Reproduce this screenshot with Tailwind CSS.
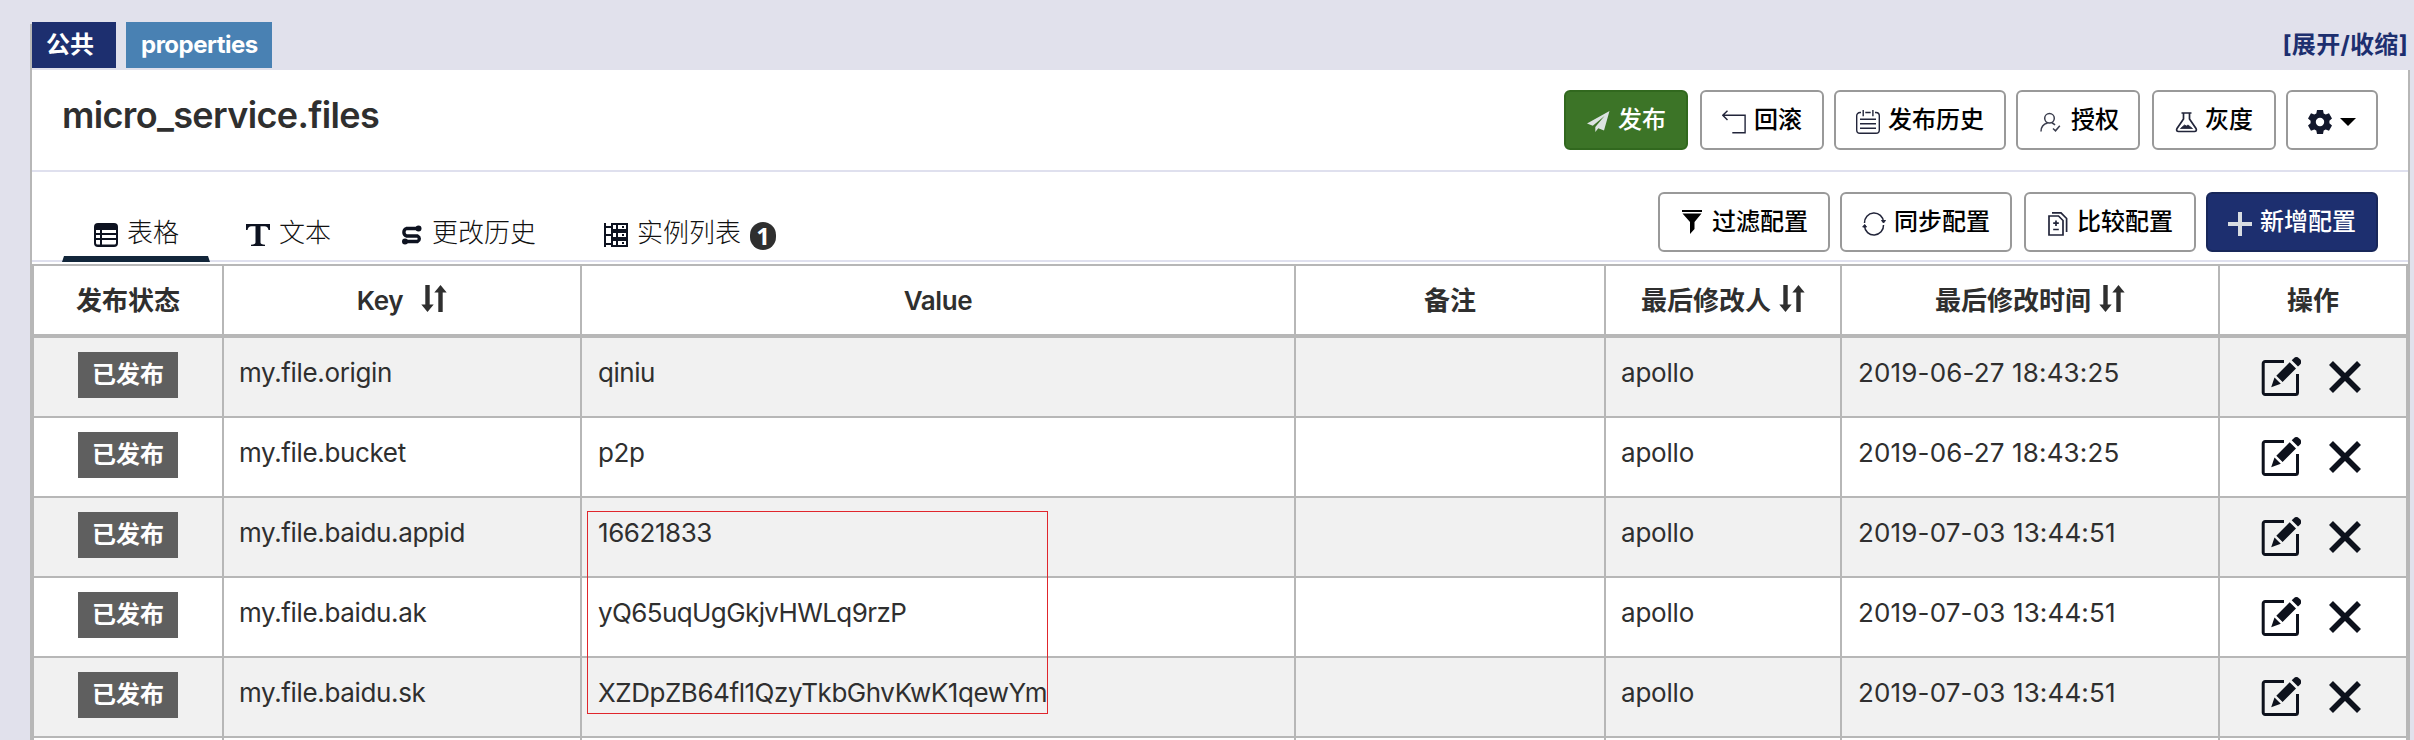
<!DOCTYPE html>
<html lang="zh-CN">
<head>
<meta charset="utf-8">
<title>micro_service.files</title>
<script src="https://cdn.jsdelivr.net/npm/@tailwindcss/browser@4"></script>
</head>
<body class="h-[740px] overflow-hidden bg-[#e1e1ec] pl-[30px] pt-6 font-[Inter,'Noto_Sans_CJK_SC',sans-serif] text-[26px] leading-9 text-[#2f2f2f]">
<svg class="hidden">
  <symbol id="sort" viewBox="0 0 26 28">
    <path d="M4.300 0h4.400v19.500h4L6.500 27 .3 19.500h4zM17.300 27h4.400V7.500h4L19.500 0l-6.200 7.500h4z" fill="#2f2f2f"/>
  </symbol>
  <symbol id="edit" viewBox="0 0 40 40">
    <path d="M23 4.500H4.200A2 2 0 0 0 2.200 6.500v29a2 2 0 0 0 2 2h30.300a2 2 0 0 0 2-2V17" fill="none" stroke="#0d111c" stroke-width="3"/>
    <path d="M28.700 5.300 35 11.600 21.600 25 15.300 18.700zM13.500 20.500l6.300 6.300L10.200 30.200zM30.700 3.300 32.600 1.400a4 4 0 0 1 5.600 0l.7.7a4 4 0 0 1 0 5.600L37 9.600z" fill="#0d111c"/>
  </symbol>
  <symbol id="cross" viewBox="0 0 32 32">
    <path d="M2 2 30 30M30 2 2 30" stroke="#0d111c" stroke-width="5.600"/>
  </symbol>
</svg>
<section class="relative h-[716px] w-[2380px] border-l-2 border-[#b7b7b7]">
  <header class="flex h-[46px] items-start justify-between text-2xl font-semibold">
    <div class="-mt-0.5 flex gap-[10px] text-white">
      <span class="flex h-[46px] w-[84px] items-center bg-[#1d2f6f] pl-[14px] font-bold">公共</span>
      <span class="flex h-[46px] w-[146px] items-center bg-[#4981b3] pl-[15px] font-bold tracking-[-0.5px]">properties</span>
    </div>
    <a class="-mt-0.5 mr-[2px] flex h-[46px] items-center font-bold tracking-[0.3px] text-[#1d2f6f]">[展开/收缩]</a>
  </header>
  <div class="h-[670px] overflow-hidden border-r-2 border-[#b7b7b7] bg-white">
    <div class="flex h-[102px] justify-between border-b-2 border-[#dfe0ee] pl-[30px] pr-[30px] pt-5">
      <h1 class="pt-[6px] text-[36px] font-semibold leading-[38px] tracking-[-0.65px]">micro_service.files</h1>
      <div class="flex text-2xl font-medium text-black">
        <button class="mr-3 flex h-[60px] w-[124px] items-center rounded-md border-2 border-[#31681e] bg-[#3c7427] pl-[20px] text-white">
          <svg class="mr-2 mt-1 h-6 w-6" viewBox="0 0 24 24"><path d="M23.500 1 1 13.500l5.800 2.300L18.500 6 9.300 17v5l3-3.800 5.700 2.300z" fill="#dce3e2"/></svg>发布</button>
        <button class="mr-[10px] flex h-[60px] w-[124px] items-center rounded-md border-2 border-[#999] pl-[20px]">
          <svg class="mr-2 mt-1 h-6 w-6" viewBox="0 0 24 24" fill="none" stroke="#22253a" stroke-width="1.400"><path d="M5.500.7.8 5.300l4.700 4.700M.8 5.300h22.300v17.500H10.300"/></svg>回滚</button>
        <button class="mr-[10px] flex h-[60px] w-[172px] items-center rounded-md border-2 border-[#999] pl-[20px]">
          <svg class="mr-2 mt-1 h-6 w-6" viewBox="0 0 24 24" fill="none" stroke="#22253a" stroke-width="1.400"><path d="M5 2.500H4A3.300 3.300 0 0 0 .7 5.800V20A3.300 3.300 0 0 0 4 23.300h16a3.300 3.300 0 0 0 3.300-3.300V5.800A3.300 3.300 0 0 0 20 2.500h-1M9.300 2.500h5.400M7.200 0v6.300M16.900 0v6.300M4 9.200h16M4 13.700h16M4 18.300h16"/></svg>发布历史</button>
        <button class="mr-3 flex h-[60px] w-[124px] items-center rounded-md border-2 border-[#999] pl-[20px]">
          <svg class="mr-[9px] mt-1 h-6 w-6" viewBox="0 0 24 24" fill="none" stroke="#3a3d4d" stroke-width="1.500"><circle cx="11.500" cy="8.300" r="4.800"/><path d="M3 21.500c0-5 2.700-7.500 6.500-8.500M14 13c1.300.4 2 .9 3 2M15 18.500l2.500 2.300 4.300-5"/></svg>授权</button>
        <button class="mr-[10px] flex h-[60px] w-[124px] items-center rounded-md border-2 border-[#999] pl-[20px]">
          <svg class="mr-[7px] mt-1 h-6 w-6" viewBox="0 0 24 24" fill="none" stroke="#22253a" stroke-width="1.700"><path d="M7.500 3h10M9.500 3v6L3 18.500c-1 2 0 3 1.500 3h16c1.500 0 2.500-1 1.500-3L15.500 9V3"/><path d="m6.500 18.500 4-3.500 2 1 1.500-1 4.500 3.500z" fill="#22253a" stroke-width=".8"/></svg>灰度</button>
        <button class="flex h-[60px] w-[92px] items-center rounded-md border-2 border-[#999] pl-[20px]">
          <svg class="mr-2 mt-1 h-6 w-6" viewBox="0 0 24 24"><path fill-rule="evenodd" fill="#12172b" d="M9 0h6l.7 3.400 2 1.100 3.300-1.200 3 5.200-2.600 2.300v2.400l2.600 2.300-3 5.200-3.300-1.200-2 1.100L15 24H9l-.7-3.400-2-1.100L3 20.700l-3-5.200 2.600-2.300v-2.400L0 8.500l3-5.200 3.300 1.200 2-1.100zM12 7.800a4.200 4.200 0 1 0 0 8.400 4.200 4.200 0 0 0 0-8.400"/></svg>
          <svg class="mt-1 h-2 w-4" viewBox="0 0 16 8"><path d="M0 0h16L8 8z"/></svg></button>
      </div>
    </div>
    <div class="flex h-[90px] justify-between border-b-2 border-[#dfe0ee] pl-[30px] pr-[30px]">
      <nav class="flex font-light text-[#111] *:flex *:items-center">
        <a class="relative mt-[41px] h-10 w-[148px] pl-8"><svg class="mr-[9px] mt-1 h-6 w-6" viewBox="0 0 24 24"><rect width="24" height="24" rx="4" fill="#0d1220"/><path d="M2 7h4v3H2zM8 7h14v3H8zM2 12h4v3H2zM8 12h14v3H8zM2 17h4v4.500H3.500Q2 21.500 2 20zM8 17h14v3q0 1.500-1.500 1.500H8z" fill="#fff"/></svg>表格
          <i class="absolute -bottom-[9px] left-0 h-1.5 w-[148px] bg-[#12263a] [clip-path:polygon(2px_0,146px_0,100%_100%,0_100%)]"></i></a>
        <a class="mt-[41px] h-10 w-[155px] pl-9"><svg class="mr-[9px] mt-1 h-6 w-6" viewBox="0 0 24 24"><path d="M0 1h24v6h-1.500Q22 3.200 18.500 3.200h-4V19.500q0 2 4.500 2.200V23H5v-1.300q4.500-.2 4.500-2.200V3.200h-4Q2 3.200 1.500 7H0z" fill="#0d1220"/></svg>文本</a>
        <a class="mt-[41px] h-10 w-[207px] pl-[35px]"><svg class="mr-2 mt-1 h-6 w-6" viewBox="0 0 24 24"><path d="M20 6H6.500a4 4 0 0 0 0 7.500h11a3 3 0 0 1 0 5.500H5" fill="none" stroke="#0d1220" stroke-width="3.400" transform="translate(0 -.5)"/><circle cx="18.500" cy="5.500" r="3" fill="#0d1220"/><circle cx="5" cy="18.500" r="3" fill="#0d1220"/></svg>更改历史</a>
        <a class="mt-[41px] h-10 pl-8"><svg class="mr-[9px] mt-1 h-6 w-6" viewBox="0 0 24 24"><g fill="none" stroke="#0d1220" stroke-width="2"><path d="M1 0v24M0 4h8M0 12h8M0 21h8"/><path d="M8 1h15v6H8zM8 9h15v6H8zM8 17h15v6H8zM13 1v22M18 4h2M18 12h2M18 20h2"/></g></svg>实例列表<span class="ml-[9px] mt-1.5 flex h-7 w-[26px] items-center justify-center rounded-full bg-[#2f2f2f] font-['Open_Sans'] text-[24px] font-bold leading-7 text-white">1</span></a>
      </nav>
      <div class="flex pt-5 text-2xl font-medium text-black">
        <button class="mr-[10px] flex h-[60px] w-[172px] items-center rounded-md border-2 border-[#999] pl-[20px]">
          <svg class="mr-2 h-6 w-6" viewBox="0 0 24 24"><path d="M2 0h20v2H2zM2.500 3.500h19L14.500 12v7L10 24V12z"/></svg>过滤配置</button>
        <button class="mr-3 flex h-[60px] w-[172px] items-center rounded-md border-2 border-[#999] pl-[20px]">
          <svg class="mr-2 mt-1 h-6 w-6" viewBox="0 0 24 24" fill="none" stroke="#22253a" stroke-width="1.500"><path d="M2.500 11a9.500 9.500 0 0 1 19-1M21.500 13a9.500 9.500 0 0 1-19 1"/><path d="m19.500 8.500 2 2.500 2-2.500zM.7 15l2-2.500 1.800 2.500z" fill="#22253a" stroke-width="1"/></svg>同步配置</button>
        <button class="mr-[10px] flex h-[60px] w-[172px] items-center rounded-md border-2 border-[#999] pl-[20px]">
          <svg class="mr-[7px] mt-1 h-6 w-6" viewBox="0 0 24 24" fill="none" stroke="#22253a" stroke-width="1.700"><path d="M3 4h9.500L17 8.500V23H3zM6 .9h9L20.600 6.500V20M10 8.500v5.500M7.200 11.200h5.600M7.200 17.500h5.600"/></svg>比较配置</button>
        <button class="flex h-[60px] w-[172px] items-center rounded-md border-2 border-[#182759] bg-[#1d2f6f] pl-[20px] text-white">
          <svg class="mr-2 mt-1 h-6 w-6" viewBox="0 0 24 24"><path d="M12 0v24M0 12h24" stroke="#d8dde2" stroke-width="4"/></svg>新增配置</button>
      </div>
    </div>
    <div class="mt-0.5 border-x-2 border-t-2 border-[#b7b7b7]">
      <div class="grid h-[72px] grid-cols-[190px_358px_714px_310px_236px_378px_186px] border-b-4 border-[#b7b7b7] font-semibold *:flex *:items-center *:justify-center *:border-r-2 *:border-[#b7b7b7] *:pt-0.5">
        <span class="font-bold">发布状态</span>
        <span><b class="font-semibold tracking-[-0.3px]">Key</b><svg class="-mt-1 ml-[18px] h-7 w-[26px]"><use href="#sort"/></svg></span>
        <span class="tracking-[-0.4px]">Value</span>
        <span class="font-bold">备注</span>
        <span class="font-bold">最后修改人<svg class="-mt-1 ml-2 h-7 w-[26px]"><use href="#sort"/></svg></span>
        <span class="font-bold">最后修改时间<svg class="-mt-1 ml-2 h-7 w-[26px]"><use href="#sort"/></svg></span>
        <span class="border-r-0! font-bold">操作</span>
      </div>
      <div id="rows"></div>
    </div>
  </div>
  <div class="absolute left-[555px] top-[487px] h-[203px] w-[461px] border border-[#e0262c]"></div>
</section>
<script>
const items = [
  ['my.file.origin', 'qiniu', '2019-06-27 18:43:25'],
  ['my.file.bucket', 'p2p', '2019-06-27 18:43:25'],
  ['my.file.baidu.appid', '16621833', '2019-07-03 13:44:51'],
  ['my.file.baidu.ak', 'yQ65uqUgGkjvHWLq9rzP', '2019-07-03 13:44:51'],
  ['my.file.baidu.sk', 'XZDpZB64fl1QzyTkbGhvKwK1qewYm', '2019-07-03 13:44:51']
];
document.getElementById('rows').innerHTML = items.map(([key, value, time]) => `
<div class="grid h-20 grid-cols-[190px_358px_714px_310px_236px_378px_186px] border-b-2 border-[#b7b7b7] odd:bg-[#f1f1f1] *:border-r-2 *:border-[#b7b7b7] *:px-4 *:pt-[17px]">
  <div class="flex items-start justify-center pt-3.5!"><span class="flex h-[46px] w-[100px] items-center justify-center bg-[#5f5f5f] text-2xl font-bold text-white">已发布</span></div>
  <div class="pl-[15px]! tracking-[-0.35px]">${key}</div>
  <div class="${value.startsWith('yQ') ? 'tracking-[-0.6px]' : 'tracking-[-0.45px]'}">${value}</div>
  <div></div>
  <div class="pl-[15px]! tracking-[-0.2px]">apollo</div>
  <div class="tracking-[0.15px]">${time}</div>
  <div class="flex items-start gap-7 border-r-0! pl-[41px]! pt-[19px]!"><svg class="h-10 w-10"><use href="#edit"/></svg><svg class="mt-1 h-8 w-8"><use href="#cross"/></svg></div>
</div>`).join('') + `
<div class="grid h-0.5 grid-cols-[190px_358px_714px_310px_236px_378px_186px] *:border-r-2 *:border-[#b7b7b7]"><i></i><i></i><i></i><i></i><i></i><i></i></div>`;
</script>
</body>
</html>
